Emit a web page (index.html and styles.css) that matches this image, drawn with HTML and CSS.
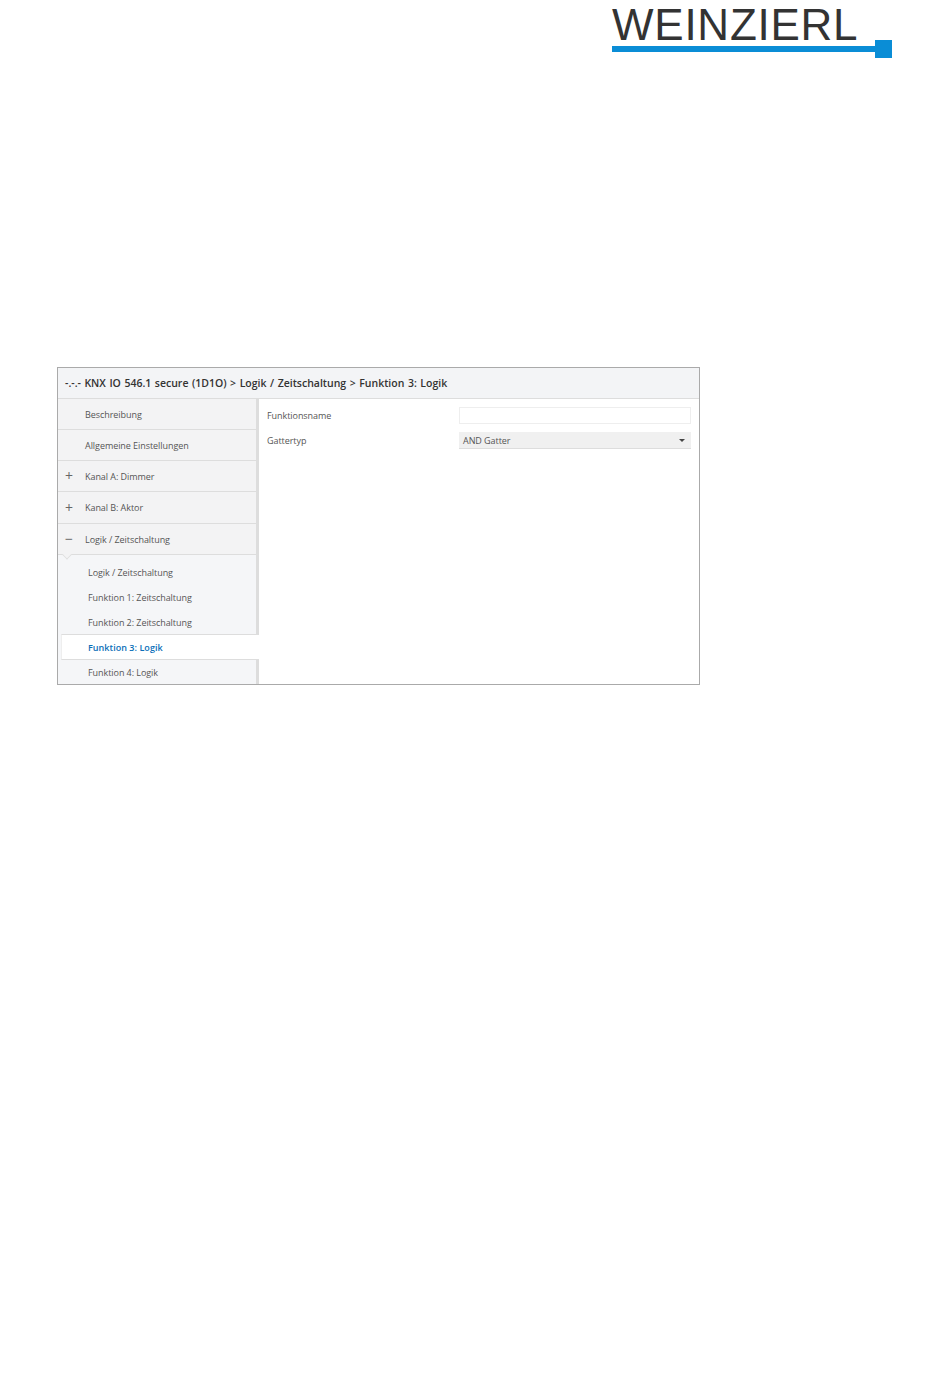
FILE: index.html
```html
<!DOCTYPE html>
<html lang="de">
  <head>
    <meta charset="UTF-8" />
    <meta name="viewport" content="width=device-width, initial-scale=1.0" />
    <title>KNX IO 546.1 secure</title>
    <link rel="stylesheet" href="styles.css">
  </head>
  <body>
    <div class="logo">
      <div class="logo-name">WEINZIERL</div>
      <div class="logo-line">
        <div class="logo-bar"></div>
        <div class="logo-square"></div>
      </div>
    </div>

    <div class="window">
      <div class="window-title">-.-.- KNX IO 546.1 secure (1D1O) &gt; Logik / Zeitschaltung &gt; Funktion 3: Logik</div>
      <div class="window-body">
        <div class="sidebar">
          <div class="nav-row"><span class="nav-sign"></span>Beschreibung</div>
          <div class="nav-row"><span class="nav-sign"></span>Allgemeine Einstellungen</div>
          <div class="nav-row"><span class="nav-sign">+</span>Kanal A: Dimmer</div>
          <div class="nav-row nav-tall"><span class="nav-sign">+</span>Kanal B: Aktor</div>
          <div class="nav-row open"><span class="nav-sign">&minus;</span>Logik / Zeitschaltung</div>
          <div class="sub-list">
            <div class="sub-row sub-first">Logik / Zeitschaltung</div>
            <div class="sub-row">Funktion 1: Zeitschaltung</div>
            <div class="sub-row">Funktion 2: Zeitschaltung</div>
            <div class="sub-row active">Funktion 3: Logik</div>
            <div class="sub-row sub-last">Funktion 4: Logik</div>
          </div>
        </div>
        <div class="content">
          <div class="field">
            <div class="field-label">Funktionsname</div>
            <div class="field-input"></div>
          </div>
          <div class="field">
            <div class="field-label">Gattertyp</div>
            <div class="field-select">AND Gatter<span class="caret"></span></div>
          </div>
        </div>
      </div>
    </div>
  </body>
</html>
```

FILE: styles.css
```css
body {
  margin: 0;
  background-color: #fff;
  font-family: "Open Sans", "Noto Sans", sans-serif;
  color: #555;
}

.logo {
  width: 280px;
  height: 367px;
  margin-left: 612px;
  box-sizing: border-box;
}
.logo-name {
  height: 40px;
  font-family: "Liberation Sans", sans-serif;
  font-size: 44px;
  line-height: 49px;
  letter-spacing: 0.75px;
  color: #333;
}
.logo-line {
  display: flex;
  align-items: center;
  height: 18px;
}
.logo-bar {
  width: 263px;
  height: 6px;
  background-color: #0a8dd6;
}
.logo-square {
  width: 17px;
  height: 18px;
  background-color: #0a8dd6;
}

.window {
  width: 641px;
  height: 316px;
  margin-left: 57px;
  border: 1px solid #aaa;
  display: flex;
  flex-direction: column;
}
.window-title {
  height: 30px;
  line-height: 30px;
  padding-left: 7px;
  background-color: #f3f4f6;
  border-bottom: 1px solid #ddd;
  font-size: 10.5px;
  font-weight: 600;
  word-spacing: 0.8px;
  color: #333;
  white-space: nowrap;
}
.window-body {
  display: flex;
  flex: 1;
}

.sidebar {
  width: 198px;
  background-color: #f3f3f4;
  border-right: 3px solid #ddd;
  font-size: 9px;
  letter-spacing: -0.06px;
}
.nav-row {
  display: flex;
  align-items: center;
  height: 30px;
  border-bottom: 1px solid #ddd;
  white-space: nowrap;
}
.nav-tall {
  height: 31px;
}
.nav-sign {
  width: 27px;
  text-align: center;
  padding-right: 5px;
  box-sizing: border-box;
  font-size: 14px;
  line-height: 1;
  color: #666;
}
.open {
  position: relative;
}
.open::after {
  content: "";
  position: absolute;
  left: 5px;
  bottom: -5px;
  width: 7px;
  height: 7px;
  background-color: #f3f3f4;
  border-right: 1px solid #ddd;
  border-bottom: 1px solid #ddd;
  transform: rotate(45deg) scale(0.8);
}
.sub-list {
  background-color: #f5f6f8;
}
.sub-row {
  height: 25px;
  line-height: 25px;
  padding-left: 30px;
  box-sizing: border-box;
  white-space: nowrap;
}
.sub-first {
  height: 30px;
  line-height: 36px;
}
.sub-last {
  height: 24px;
}
.active {
  margin: -1px -3px 0 3px;
  padding-left: 26px;
  height: 26px;
  line-height: 25px;
  background-color: #fff;
  border-top: 1px solid #ddd;
  border-bottom: 1px solid #ddd;
  border-left: 1px solid #eee;
  color: #0b6fb8;
  font-weight: 600;
  letter-spacing: 0.04px;
  position: relative;
}

.content {
  flex: 1;
  padding: 8px 8px 0 8px;
  font-size: 9px;
  letter-spacing: -0.06px;
}
.field {
  display: flex;
  align-items: center;
  height: 17px;
  margin-bottom: 8px;
}
.field-label {
  width: 192px;
}
.field-input {
  width: 232px;
  height: 17px;
  box-sizing: border-box;
  border: 1px solid #eee;
}
.field-select {
  display: flex;
  align-items: center;
  justify-content: space-between;
  width: 232px;
  height: 17px;
  box-sizing: border-box;
  padding: 0 6px 0 4px;
  background-color: #f0f0f0;
  border-bottom: 1px solid #ddd;
}
.caret {
  border-left: 3px solid transparent;
  border-right: 3px solid transparent;
  border-top: 3px solid #444;
}
```
